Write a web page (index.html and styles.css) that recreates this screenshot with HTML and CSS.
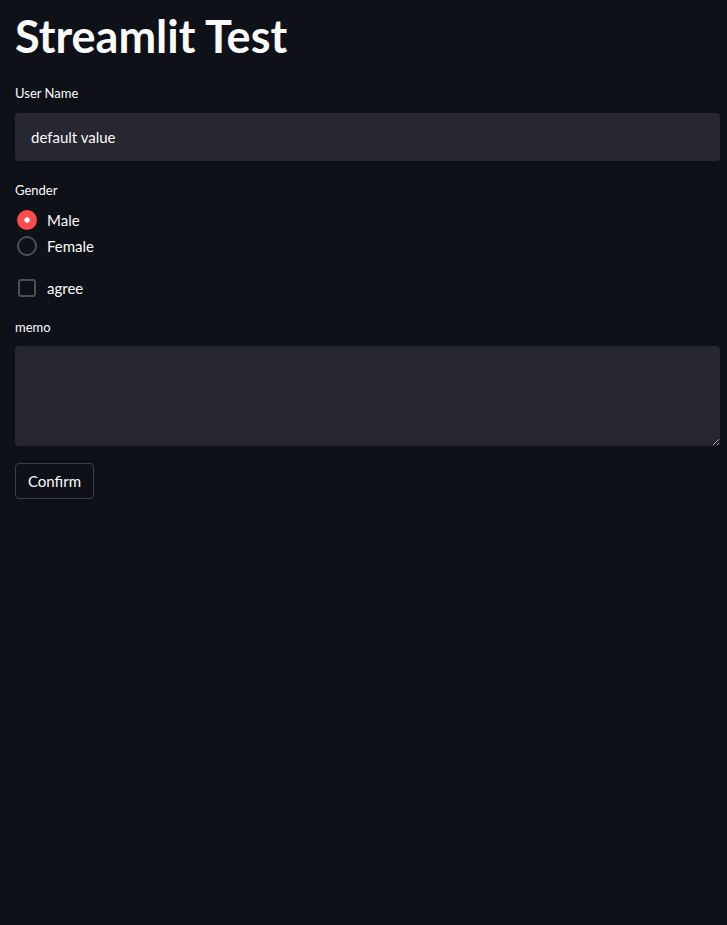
FILE: index.html
```html
<!DOCTYPE html>
<html lang="en">
  <head>
    <meta charset="UTF-8" />
    <meta name="viewport" content="width=device-width, initial-scale=1.0" />
    <title>Streamlit Test</title>
    <link rel="stylesheet" href="styles.css">
  </head>
  <body>
    <main class="main">
      <h1 class="title">Streamlit Test</h1>

      <div class="field field-name">
        <label class="label" for="user-name">User Name</label>
        <input class="text-input" id="user-name" type="text" value="default value" />
      </div>

      <div class="field">
        <div class="label">Gender</div>
        <div class="radio-group">
          <label class="radio checked"><span class="dot"></span>Male</label>
          <label class="radio"><span class="dot"></span>Female</label>
        </div>
      </div>

      <label class="checkbox"><span class="box"></span>agree</label>

      <div class="field">
        <label class="label label-memo" for="memo">memo</label>
        <textarea class="text-area" id="memo"></textarea>
      </div>

      <button class="btn">Confirm</button>
    </main>
  </body>
</html>
```

FILE: styles.css
```css
html,
body {
  margin: 0;
  background: #0e1117;
  color: #fafafa;
  font-family: "Lato", "Noto Sans", sans-serif;
}
.main {
  padding: 0 7px 0 15px;
}
.title {
  margin: 0;
  padding: 13px 0 0;
  font-size: 45px;
  line-height: 46px;
  font-weight: 700;
  letter-spacing: 0;
}
.field {
  margin-top: 21px;
}
.field-name {
  margin-top: 26px;
}
.label {
  display: block;
  font-size: 13px;
  line-height: 16px;
  margin-bottom: 12px;
}
.label-memo {
  margin-bottom: 11px;
}
.text-input {
  display: block;
  box-sizing: border-box;
  width: 100%;
  height: 48px;
  padding: 0 16px;
  border: 0;
  border-radius: 4px;
  background: #262730;
  color: #fafafa;
  font: inherit;
  font-size: 15px;
  outline: none;
}
.radio-group {
  display: flex;
  flex-direction: column;
  gap: 6px;
  margin-top: 3px;
}
.radio,
.checkbox {
  display: flex;
  align-items: center;
  gap: 10px;
  font-size: 15px;
  line-height: 20px;
  margin-left: 2px;
}
.dot {
  box-sizing: border-box;
  width: 20px;
  height: 20px;
  border-radius: 50%;
  border: 2px solid #4d4f57;
}
.radio.checked .dot {
  border: 0;
  background: radial-gradient(circle, #fafafa 0 2.5px, #ff4b4b 3px);
}
.checkbox {
  margin-top: 22px;
  margin-left: 3px;
}
.box {
  box-sizing: border-box;
  width: 18px;
  height: 18px;
  border-radius: 3px;
  border: 2px solid #4d4f57;
  margin-right: 1px;
}
.text-area {
  display: block;
  box-sizing: border-box;
  width: 100%;
  height: 100px;
  border: 0;
  border-radius: 4px;
  background: #262730;
  color: #fafafa;
  font: inherit;
  resize: vertical;
  outline: none;
}
.btn {
  margin-top: 17px;
  padding: 0 12px;
  height: 36px;
  border: 1px solid #3b3d45;
  border-radius: 4px;
  background: #0e1117;
  color: #fafafa;
  font: inherit;
  font-size: 15px;
}
```
